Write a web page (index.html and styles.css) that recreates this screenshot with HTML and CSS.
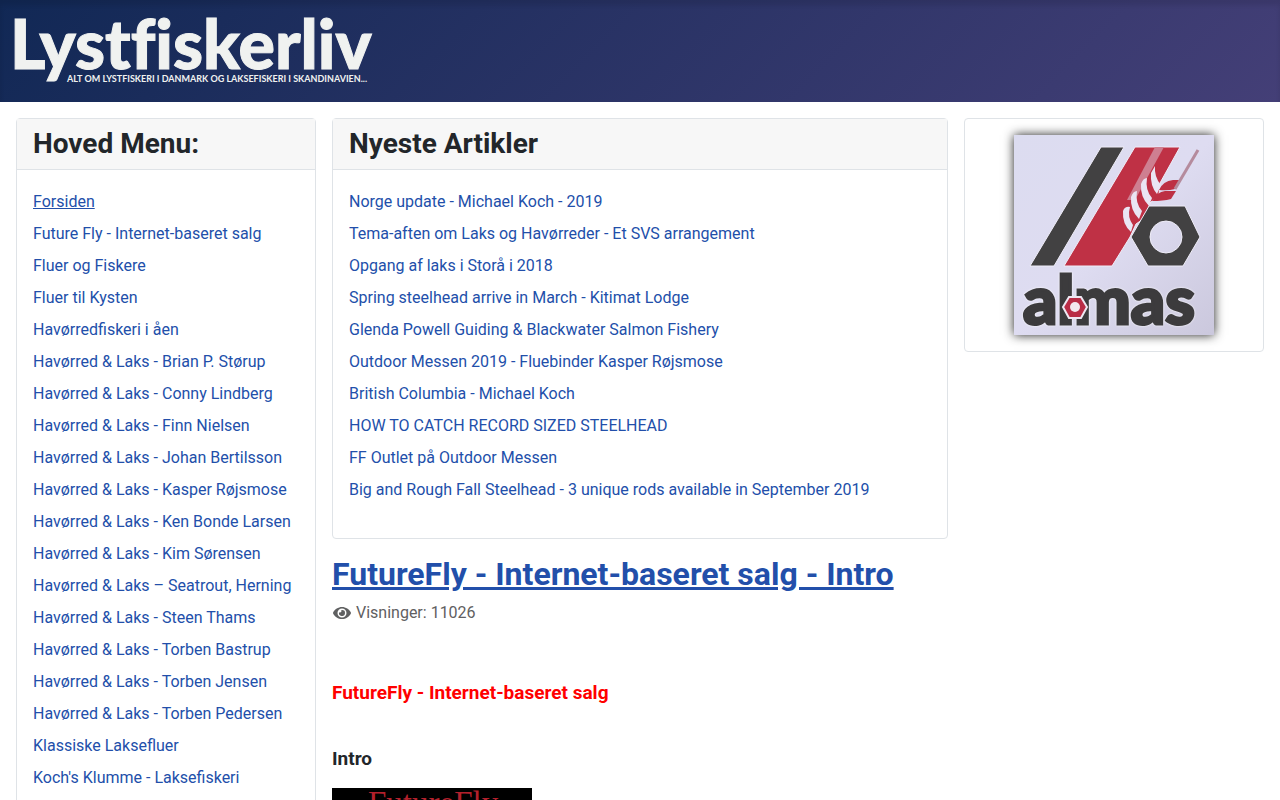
FILE: index.html
```html
<!DOCTYPE html>
<html lang="da">
<head>
    <meta charset="UTF-8">
    <meta name="viewport" content="width=device-width, initial-scale=1.0">
    <title>Lystfiskerliv</title>
    <link rel="stylesheet" href="styles.css">
</head>
<body>
    <header class="header">
        <a class="brand" href="#" aria-label="Lystfiskerliv">
            <svg class="logo" width="376" height="86" viewBox="0 0 376 86">
                <text class="logo-name" x="2" y="61">Lystfiskerliv</text>
                <text class="logo-tagline" x="59" y="74">ALT OM LYSTFISKERI I DANMARK OG LAKSEFISKERI I SKANDINAVIEN...</text>
            </svg>
        </a>
    </header>

    <div class="site-grid">
        <aside class="card">
            <h3 class="card-header">Hoved Menu:</h3>
            <nav class="card-body">
                <ul class="menu">
                    <li><a class="current" href="#">Forsiden</a></li>
                    <li><a href="#">Future Fly - Internet-baseret salg</a></li>
                    <li><a href="#">Fluer og Fiskere</a></li>
                    <li><a href="#">Fluer til Kysten</a></li>
                    <li><a href="#">Havørredfiskeri i åen</a></li>
                    <li><a href="#">Havørred &amp; Laks - Brian P. Størup</a></li>
                    <li><a href="#">Havørred &amp; Laks - Conny Lindberg</a></li>
                    <li><a href="#">Havørred &amp; Laks - Finn Nielsen</a></li>
                    <li><a href="#">Havørred &amp; Laks - Johan Bertilsson</a></li>
                    <li><a href="#">Havørred &amp; Laks - Kasper Røjsmose</a></li>
                    <li><a href="#">Havørred &amp; Laks - Ken Bonde Larsen</a></li>
                    <li><a href="#">Havørred &amp; Laks - Kim Sørensen</a></li>
                    <li><a href="#">Havørred &amp; Laks – Seatrout, Herning</a></li>
                    <li><a href="#">Havørred &amp; Laks - Steen Thams</a></li>
                    <li><a href="#">Havørred &amp; Laks - Torben Bastrup</a></li>
                    <li><a href="#">Havørred &amp; Laks - Torben Jensen</a></li>
                    <li><a href="#">Havørred &amp; Laks - Torben Pedersen</a></li>
                    <li><a href="#">Klassiske Laksefluer</a></li>
                    <li><a href="#">Koch's Klumme - Laksefiskeri</a></li>
                </ul>
            </nav>
        </aside>

        <main class="content">
            <section class="card">
                <h3 class="card-header">Nyeste Artikler</h3>
                <div class="card-body">
                    <ul class="menu">
                        <li><a href="#">Norge update - Michael Koch - 2019</a></li>
                        <li><a href="#">Tema-aften om Laks og Havørreder - Et SVS arrangement</a></li>
                        <li><a href="#">Opgang af laks i Storå i 2018</a></li>
                        <li><a href="#">Spring steelhead arrive in March - Kitimat Lodge</a></li>
                        <li><a href="#">Glenda Powell Guiding &amp; Blackwater Salmon Fishery</a></li>
                        <li><a href="#">Outdoor Messen 2019 - Fluebinder Kasper Røjsmose</a></li>
                        <li><a href="#">British Columbia - Michael Koch</a></li>
                        <li><a href="#">HOW TO CATCH RECORD SIZED STEELHEAD</a></li>
                        <li><a href="#">FF Outlet på Outdoor Messen</a></li>
                        <li><a href="#">Big and Rough Fall Steelhead - 3 unique rods available in September 2019</a></li>
                    </ul>
                </div>
            </section>

            <article class="article">
                <h2><a href="#">FutureFly - Internet-baseret salg - Intro</a></h2>
                <p class="hits">
                    <svg class="eye" width="20" height="16" viewBox="0 0 576 512" aria-hidden="true">
                        <path d="M572.5 241.4C518.3 135.6 410.9 64 288 64S57.7 135.600 3.500 241.400a32.400 32.400 0 0 0 0 29.200C57.700 376.400 165.100 448 288 448s230.300-71.600 284.500-177.400a32.400 32.400 0 0 0 0-29.200zM288 400a144 144 0 1 1 144-144 143.900 143.900 0 0 1-144 144zm0-240a95.300 95.300 0 0 0-25.300 3.800 47.900 47.900 0 0 1-66.900 66.900A95.800 95.800 0 1 0 288 160z"/>
                    </svg>
                    Visninger: 11026
                </p>
                <h4 class="red">FutureFly - Internet-baseret salg</h4>
                <h4>Intro</h4>
                <svg class="picture" width="200" height="150" viewBox="0 0 200 150" role="img" aria-label="FutureFly">
                    <rect width="200" height="150" fill="#000"/>
                    <text class="picture-title" x="36" y="26">FutureFly</text>
                </svg>
            </article>
        </main>

        <aside class="card banner">
            <a href="#" aria-label="almas">
                <svg class="almas" width="200" height="200" viewBox="0 0 200 200">
                    <defs>
                        <linearGradient id="paper" x1="0" y1="0" x2="1" y2="1">
                            <stop offset="0" stop-color="#dcdcf0"/>
                            <stop offset="0.5" stop-color="#dedcf1"/>
                            <stop offset="1" stop-color="#cbc8dd"/>
                        </linearGradient>
                    </defs>
                    <rect width="200" height="200" fill="url(#paper)"/>
                    <path d="M87 12h23L40 131H16z" fill="#424142" stroke="#efedf8" stroke-width="1"/>
                    <path d="M121 12h45l-20 36-1 12-9 8-4 14-10 7-6 13-18 29H50z" fill="#bf3145" stroke="#efedf8" stroke-width="1"/>
                    <!-- ear of wheat -->
                    <path d="M141 12h9L121 65h-8z" fill="#ce7f91"/>
                    <g fill="#eae5f3">
                        <path d="M109 76q2-5 7-4-3 10 3 18l-2 7q-9-8-8-21z"/>
                        <path d="M117 62q2-6 6-6-2 12 5 20l-3 8q-9-9-8-22z"/>
                        <path d="M127 49q2-6 6-6-2 12 5 20l-3 8q-9-9-8-22z"/>
                        <path d="M137 38l4-7q-1 11 6 19l-4 9q-7-8-6-21z"/>
                    </g>
                    <g fill="#bd3044">
                        <path d="M145 55q4-9 14-10h8l-6 9q-7 2-16 1z"/>
                        <path d="M138 66q5-9 13-10h11l-5 8q-8 2-19 2z"/>
                    </g>
                    <path d="M184 15l-23 39" fill="none" stroke="#b58b9d" stroke-width="3"/>
                    <!-- nut -->
                    <path fill-rule="evenodd" d="M135 71h36l15 31-17 29h-35l-17-29zM152 86a16 16 0 1 0 0 32 16 16 0 1 0 0-32z" fill="#424142" stroke="#efedf8" stroke-width="1"/>
                    <text class="almas-name" x="9" y="189">almas</text>
                    <path d="M55 162h12l6 10-6 11H55l-6-11z" fill="#b92c46" stroke="#eee7f2" stroke-width="2"/>
                    <circle cx="61" cy="172" r="5" fill="#f2e8ef"/>
                </svg>
            </a>
        </aside>
    </div>
</body>
</html>
```
FILE: styles.css
```css
* {
    box-sizing: border-box;
}
body {
    margin: 0;
    font-family: Roboto, sans-serif;
    font-size: 16px;
    line-height: 24px;
    color: #22262a;
    background-color: #fff;
}
a {
    color: #224faa;
}
.header {
    padding: 8px;
    background-image: linear-gradient(135deg, #112855 0%, #443f77 100%);
    box-shadow: inset 0 5px 5px rgba(0, 0, 0, 0.1);
}
.brand,
.banner a {
    display: block;
}
.logo,
.almas,
.picture {
    display: block;
}
.logo text {
    font-family: Lato, sans-serif;
    font-variant-ligatures: none;
    fill: #f0f2f0;
}
.logo-name {
    font-size: 68px;
    font-weight: 900;
    stroke: #f0f2f0;
    stroke-width: 1px;
}
.logo-tagline {
    font-size: 9px;
    font-weight: 700;
}
.site-grid {
    display: grid;
    grid-template-columns: repeat(4, minmax(0, 1fr));
    gap: 16px;
    padding: 16px;
}
.content {
    grid-column: span 2;
}
.card {
    border: 1px solid #dfe3e7;
    border-radius: 4px;
}
.card-header {
    margin: 0;
    padding: 8px 16px;
    font-size: 28px;
    line-height: 34px;
    background-color: #f7f7f7;
    border-bottom: 1px solid #dfe3e7;
}
.card-body {
    padding: 16px;
}
.menu {
    list-style: none;
    margin: 0 0 16px;
    padding: 0;
}
.menu li {
    padding: 4px 0;
}
.menu a {
    text-decoration: none;
}
.menu a.current {
    text-decoration: underline;
}
.article {
    padding-top: 16px;
}
.article h2 {
    margin: 0 0 8px;
    font-size: 32px;
    line-height: 38px;
}
.hits {
    display: flex;
    align-items: center;
    gap: 4px;
    margin: 0 0 56px;
    color: #5f6061;
}
.eye {
    fill: #5f6061;
}
.article h4 {
    margin: 0 0 17px;
    font-size: 19px;
    line-height: 24px;
}
.article h4.red {
    margin-bottom: 42px;
    color: #f00;
}
.picture-title {
    font-family: "Liberation Serif", serif;
    font-size: 33px;
    fill: #b3202c;
}
.banner {
    align-self: start;
    display: flex;
    justify-content: center;
    padding: 16px;
}
.almas {
    box-shadow: 0 0 10px #222;
}
.almas-name {
    font-family: Lato, sans-serif;
    font-size: 67px;
    font-weight: 900;
    fill: #3c3b3d;
    stroke: #3c3b3d;
    stroke-width: 3px;
    filter: drop-shadow(0 0 1px #fff);
}
```
